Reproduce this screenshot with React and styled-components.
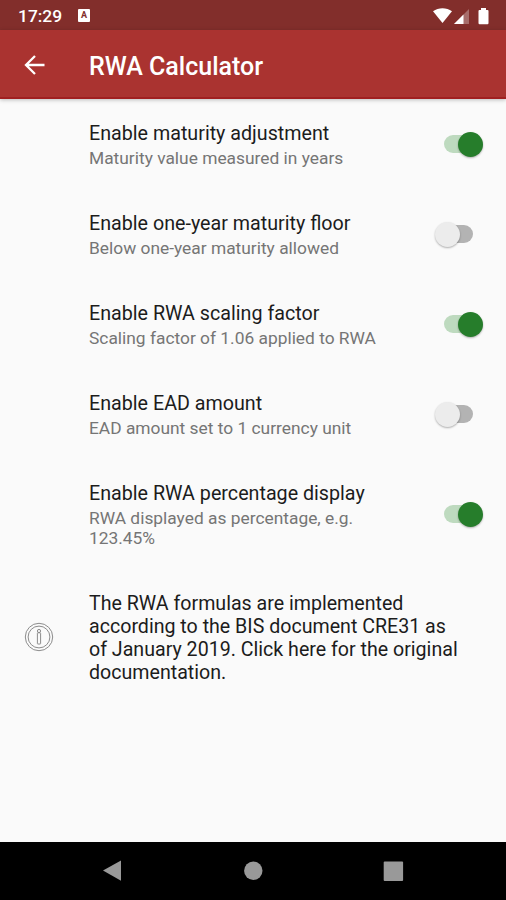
import { useState } from "react";
import styled, { createGlobalStyle } from "styled-components";

const settings = [
    { id: "maturity", title: "Enable maturity adjustment", summary: "Maturity value measured in years", on: true },
    { id: "floor", title: "Enable one-year maturity floor", summary: "Below one-year maturity allowed", on: false },
    { id: "scaling", title: "Enable RWA scaling factor", summary: "Scaling factor of 1.06 applied to RWA", on: true },
    { id: "ead", title: "Enable EAD amount", summary: "EAD amount set to 1 currency unit", on: false },
    { id: "percentage", title: "Enable RWA percentage display", summary: "RWA displayed as percentage, e.g. 123.45%", on: true },
];

function App () {

    const [values, setValues] = useState(() => Object.fromEntries(settings.map((s) => [s.id, s.on])));

    const toggleHandler = (id) => {
        setValues((prev) => ({ ...prev, [id]: !prev[id] }));
    }

    return (
        <>
            <GlobalStyle />
            <Screen>
                <StatusBar>
                    <Clock>17:29</Clock>
                    <Notification>A</Notification>
                    <StatusIcons width="58" height="20" viewBox="0 0 58 20">
                        <path d="M1 5.2C6.500 1.200 14.500 1.200 20 5.200L10.500 17Z" fill="#fff" />
                        <path d="M37 3V18H22Z" fill="#fff" fillOpacity="0.3" />
                        <path d="M31.500 8.500V18H22Z" fill="#fff" />
                        <path d="M49 2h5v2h1.500q1 0 1 1v12q0 1.200-1 1.200h-8q-1 0-1-1.200V5q0-1 1-1H49Z" fill="#fff" />
                    </StatusIcons>
                </StatusBar>
                <AppBar>
                    <BackButton aria-label="Back">
                        <svg width="22" height="22" viewBox="0 0 22 22" fill="none" stroke="#fff" strokeWidth="2.3">
                            <path d="M20.500 11H2.500M11 2L2 11L11 20" />
                        </svg>
                    </BackButton>
                    <h1>RWA Calculator</h1>
                </AppBar>
                <List>
                    {settings.map(({ id, title, summary }) => (
                        <Row key={id}>
                            <Texts>
                                <Title>{title}</Title>
                                <Summary>{summary}</Summary>
                            </Texts>
                            <Switch
                                role="switch"
                                aria-label={title}
                                aria-checked={values[id]}
                                $on={values[id]}
                                onClick={() => toggleHandler(id)}
                            >
                                <Thumb $on={values[id]} />
                            </Switch>
                        </Row>
                    ))}
                    <InfoRow>
                        <InfoIcon width="30" height="30" viewBox="0 0 30 30">
                            <circle cx="15" cy="15" r="13.700" />
                            <circle cx="15" cy="15" r="10.900" />
                            <circle cx="15" cy="9" r="1.600" />
                            <rect x="13.400" y="10.800" width="3.200" height="11.200" rx="0.500" />
                        </InfoIcon>
                        <InfoText>
                            The RWA formulas are implemented according to the BIS document CRE31 as
                            of January 2019. Click here for the original documentation.
                        </InfoText>
                    </InfoRow>
                </List>
                <NavBar>
                    <svg width="22" height="22" viewBox="0 0 22 22"><path d="M1 10.500L19 0.500V20.700Z" /></svg>
                    <svg width="22" height="22" viewBox="0 0 22 22"><circle cx="11.300" cy="10.700" r="9.200" /></svg>
                    <svg width="22" height="22" viewBox="0 0 22 22"><rect x="1.700" y="1.500" width="19.400" height="19.400" rx="1" /></svg>
                </NavBar>
            </Screen>
        </>
    );
}

const GlobalStyle = createGlobalStyle`
    * {
        margin: 0;
        padding: 0;
        box-sizing: border-box;
    }

    body {
        font-family: Roboto, "Noto Sans", sans-serif;
        background-color: #fafafa;
    }

    button {
        border: none;
        background: none;
        cursor: pointer;
    }
`;

const Screen = styled.div`
    width: 506px;
    height: 900px;
    display: flex;
    flex-direction: column;
    background-color: #fafafa;
    overflow: hidden;
`;

const StatusBar = styled.div`
    height: 30px;
    padding: 2px 16px 0 18px;
    display: flex;
    align-items: center;
    background-color: #822e2b;
    color: white;
`;

const Clock = styled.span`
    width: 60px;
    font-size: 17.4px;
    font-weight: 500;
`;

const Notification = styled.span`
    width: 12px;
    height: 13px;
    margin: 0 auto 1px 0;
    border-radius: 1px;
    background-color: white;
    color: #822e2b;
    font-size: 9px;
    font-weight: 700;
    line-height: 13px;
    text-align: center;
`;

const StatusIcons = styled.svg`
    display: block;
    margin-bottom: 1px;
`;

const AppBar = styled.header`
    height: 69px;
    padding-left: 24px;
    display: flex;
    align-items: center;
    background-color: #aa3330;
    border-bottom: 2px solid #a01f20;
    box-shadow: 0 1px 4px rgba(0, 0, 0, 0.25);
    color: white;

    h1 {
        padding-top: 6px;
        font-size: 25px;
        font-weight: 500;
        line-height: 30px;
    }
`;

const BackButton = styled.button`
    width: 65px;
    height: 22px;
    margin-top: 2px;
    text-align: left;

    svg {
        display: block;
    }
`;

const List = styled.main`
    flex: 1;
`;

const Row = styled.div`
    min-height: 90px;
    padding: 23px 20px 21px 89px;
    display: flex;
    align-items: center;
    justify-content: space-between;
`;

const Texts = styled.div`
    width: 300px;
`;

const Title = styled.h2`
    font-size: 19.7px;
    font-weight: 400;
    line-height: 23px;
    color: #1c1c1c;
`;

const Summary = styled.p`
    margin-top: 3px;
    font-size: 17.38px;
    line-height: 20px;
    color: #757575;
`;

const Switch = styled.button`
    width: 30px;
    height: 18px;
    margin: ${({ $on }) => ($on ? "0 12px 2px 0" : "0 13px 2px 0")};
    display: flex;
    align-items: center;
    justify-content: ${({ $on }) => ($on ? "flex-end" : "flex-start")};
    border-radius: 9px;
    background-color: ${({ $on }) => ($on ? "#bedabf" : "#b3b3b3")};
`;

const Thumb = styled.span`
    flex: none;
    width: 25px;
    height: 25px;
    margin: ${({ $on }) => ($on ? "0 -9px 0 0" : "0 0 0 -8px")};
    border-radius: 50%;
    background-color: ${({ $on }) => ($on ? "#267d2b" : "#ececec")};
    box-shadow: 0 1px 2px rgba(0, 0, 0, 0.3);
`;

const InfoRow = styled.div`
    padding: 23px 40px 22px 24px;
    display: flex;
    align-items: center;
`;

const InfoIcon = styled.svg`
    flex: none;
    margin: 0 35px 3px 0;
    fill: none;
    stroke: #8c8c8c;
    stroke-width: 1;
`;

const InfoText = styled.p`
    width: 375px;
    font-size: 19.63px;
    line-height: 23px;
    color: #1c1c1c;
`;

const NavBar = styled.nav`
    height: 58px;
    padding: 0 102px;
    display: flex;
    align-items: center;
    justify-content: space-between;
    background-color: black;

    svg {
        display: block;
        fill: #999;
    }
`;

export default App;
